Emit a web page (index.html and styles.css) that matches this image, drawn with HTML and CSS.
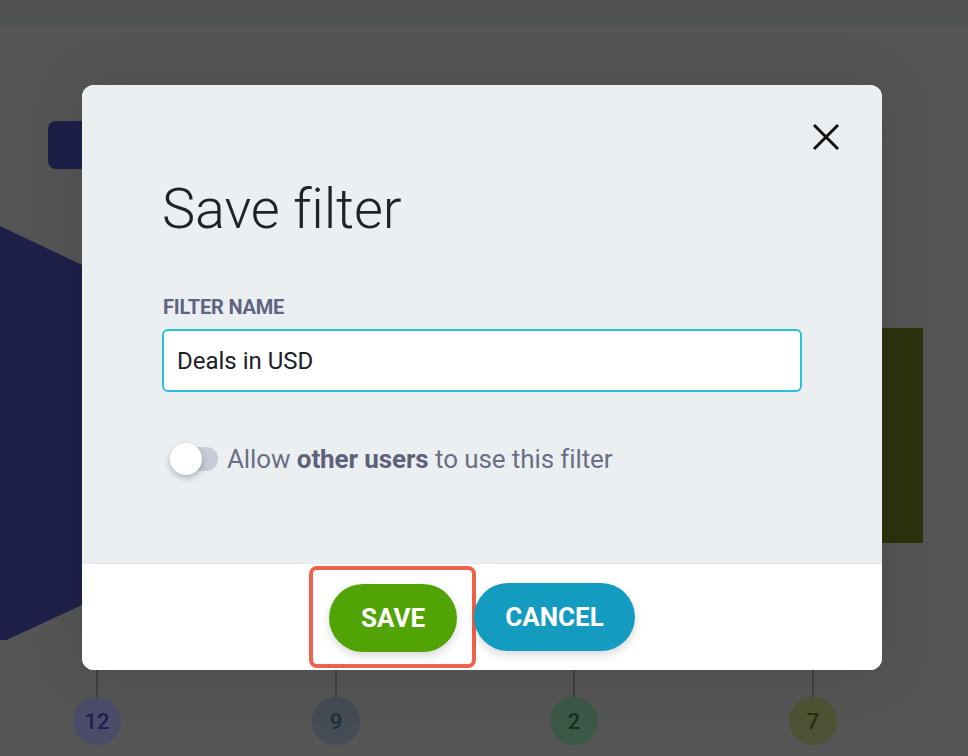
FILE: index.html
```html
<!DOCTYPE html>
<html lang="en">
<head>
<meta charset="utf-8">
<title>Save filter</title>
<link rel="stylesheet" href="styles.css">
</head>
<body>
<div class="page">
  <div class="topbar"></div>
  <div class="chart">
    <div class="chip"></div>
    <svg class="wedge" width="82" height="440" viewBox="0 0 82 440"><polygon points="0,26 82,65 82,405 0,443" fill="#1e2049"/></svg>
    <div class="olive"></div>
    <div class="pin pin-1"><span class="stem"></span><span class="dot">12</span></div>
    <div class="pin pin-2"><span class="stem"></span><span class="dot">9</span></div>
    <div class="pin pin-3"><span class="stem"></span><span class="dot">2</span></div>
    <div class="pin pin-4"><span class="stem"></span><span class="dot">7</span></div>
  </div>

  <div class="modal">
    <button class="close" aria-label="Close">
      <svg width="28" height="28" viewBox="0 0 28 28"><path d="M2 2 L26 26 M26 2 L2 26" stroke="#111" stroke-width="3" fill="none"/></svg>
    </button>
    <div class="modal-body">
      <h1 class="title">Save filter</h1>
      <label class="field-label" for="fname">FILTER NAME</label>
      <input id="fname" class="field-input" type="text" value="Deals in USD">
      <div class="toggle-row">
        <span class="toggle"><span class="knob"></span></span>
        <span class="toggle-text">Allow <b>other users</b> to use this filter</span>
      </div>
    </div>
    <div class="modal-footer">
      <div class="highlight">
        <button class="btn btn-save">SAVE</button>
      </div>
      <button class="btn btn-cancel">CANCEL</button>
    </div>
  </div>
</div>
</body>
</html>
```
FILE: styles.css
```css
* { box-sizing: border-box; }
html, body { margin: 0; padding: 0; }
body {
  width: 968px;
  height: 756px;
  overflow: hidden;
  background: #555555;
  font-family: Roboto, "Liberation Sans", sans-serif;
}
.page { position: relative; width: 968px; height: 756px; }
.topbar { height: 26px; background: #505251; }
.chart { position: absolute; inset: 26px 0 0 0; }
.chip {
  position: absolute; left: 48px; top: 95px;
  width: 60px; height: 48px; border-radius: 8px; background: #1c2048;
}
.wedge { position: absolute; left: 0; top: 174px; }
.olive { position: absolute; left: 882px; top: 302px; width: 41px; height: 215px; background: #2c310e; }
.pin {
  position: absolute; top: 644px; width: 48px;
  display: flex; flex-direction: column; align-items: center;
}
.pin-1 { left: 73px; }
.pin-2 { left: 312px; }
.pin-3 { left: 550px; }
.pin-4 { left: 789px; }
.stem { width: 2px; height: 27px; background: #3f3f3f; }
.dot {
  width: 48px; height: 48px; border-radius: 50%;
  display: flex; align-items: center; justify-content: center;
  font-size: 22px; font-weight: 500;
}
.pin-1 .dot { background: #4a4c69; color: #1e2050; }
.pin-2 .dot { background: #454c55; color: #1b2f3c; }
.pin-3 .dot { background: #3c5847; color: #14301e; }
.pin-4 .dot { background: #4d5335; color: #2a300e; }

.modal {
  position: absolute; left: 82px; top: 85px;
  width: 800px; height: 585px;
  border-radius: 12px; overflow: hidden;
  background: #ffffff;
  display: flex; flex-direction: column;
  box-shadow: 0 0 60px rgba(0,0,0,0.12);
}
.close {
  position: absolute; right: 42px; top: 38px;
  width: 28px; height: 28px; padding: 0; border: 0; background: none;
  display: flex;
}
.modal-body {
  flex: 0 0 478px;
  background: #eceff2;
  padding: 93px 80px 0 80px;
  display: flex; flex-direction: column;
}
.title {
  margin: 0;
  font-size: 56px; font-weight: 300; line-height: 62px;
  color: #1f2228; letter-spacing: -0.2px;
}
.field-label {
  margin: 55px 0 0 1px;
  font-size: 20px; font-weight: 700; color: #5f6580;
  line-height: 24px; letter-spacing: -0.2px;
}
.field-input {
  margin-top: 10px;
  width: 640px; height: 63px;
  border: 2px solid #27c1d9; border-radius: 6px;
  background: #fff;
  padding: 0 13px;
  font-family: Roboto, "Liberation Sans", sans-serif;
  font-size: 24px; color: #1e2027;
  outline: none;
}
.toggle-row {
  margin-top: 52px;
  display: flex; align-items: center;
}
.toggle {
  position: relative; width: 46px; height: 24px;
  border-radius: 12px; background: #c8cbd6;
  margin-left: 10px; flex: 0 0 auto;
}
.knob {
  position: absolute; left: -2px; top: -4px;
  width: 32px; height: 32px; border-radius: 50%;
  background: #fff;
  box-shadow: 0 3px 6px rgba(0,0,0,0.25);
}
.toggle-text {
  margin-left: 9px;
  font-size: 26px; color: #6b6f84; letter-spacing: -0.1px;
}
.toggle-text b { font-weight: 700; color: #5d6279; }

.modal-footer {
  flex: 1 1 auto;
  background: #fff;
  display: flex; align-items: center; justify-content: center;
  padding-right: 20px;
  border-top: 1px solid #e6e8ec;
}
.highlight {
  border: 4px solid #ef624a; border-radius: 8px;
  padding: 14px 15px 12px 16px;
  margin-right: -2px;
  display: flex;
}
.btn {
  height: 68px; border: 0; border-radius: 34px;
  font-family: Roboto, "Liberation Sans", sans-serif;
  font-size: 26px; font-weight: 700; color: #fff;
  box-shadow: 0 4px 10px rgba(0,0,0,0.15);
}
.btn-save { width: 128px; background: #52a406; }
.btn-cancel { width: 161px; background: #149bc0; }
```
